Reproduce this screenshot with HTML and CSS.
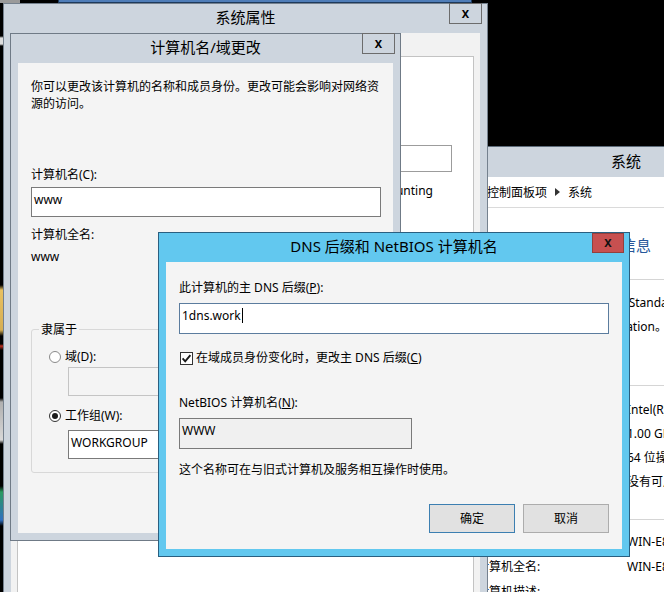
FILE: index.html
```html
<!DOCTYPE html>
<html lang="zh-CN">
<head>
    <meta charset="UTF-8">
    <title>DNS 后缀和 NetBIOS 计算机名</title>
    <link rel="stylesheet" href="styles.css">
</head>
<body>
    <!-- 桌面边缘 -->
    <div class="icons"></div>
    <div class="corner"></div>
    <div class="behind"></div>

    <!-- 控制面板 / 系统 -->
    <div class="win cp">
        <div class="titlebar"><span class="title">系统</span></div>
        <div class="cp-address">
            <span>所有控制面板项</span>
            <svg class="crumb" width="5" height="8" viewBox="0 0 5 8"><path d="M0 0 L5 4 L0 8 Z" fill="#333"/></svg>
            <span>系统</span>
        </div>
        <div class="cp-body">
            <div class="cp-heading">查看有关计算机的基本信息</div>
            <div class="cp-section first">
                <div class="cp-row wide">Windows Server 2012 R2 Standard</div>
                <div class="cp-row wide">© 2013 Microsoft Corporation。保留所有权利。</div>
            </div>
            <div class="cp-section second">
                <div class="cp-row"><span>处理器:</span><span>Intel(R) Xeon(R) CPU E5-2630</span></div>
                <div class="cp-row"><span>安装的内存(RAM):</span><span>1.00 GB</span></div>
                <div class="cp-row"><span>系统类型:</span><span>64 位操作系统，基于 x64 的处理器</span></div>
                <div class="cp-row"><span>笔和触摸:</span><span>没有可用于此显示器的笔或触控输入</span></div>
            </div>
            <div class="cp-section third">
                <div class="cp-row tall"><span>计算机名:</span><span>WIN-E8G5RQ1MJ0K</span></div>
                <div class="cp-row tall"><span>计算机全名:</span><span>WIN-E8G5RQ1MJ0K</span></div>
                <div class="cp-row tall"><span>计算机描述:</span><span></span></div>
            </div>
        </div>
    </div>

    <!-- 系统属性 -->
    <div class="win sysprops">
        <div class="titlebar">
            <span class="title">系统属性</span>
            <span class="close">X</span>
        </div>
        <div class="client">
            <div class="tabs"></div>
            <div class="tab-page">
                <div class="desc-box"></div>
                <div class="example">例如: "IIS Production Server" 或 "Accounting</div>
            </div>
        </div>
    </div>

    <!-- 计算机名/域更改 -->
    <div class="win dlg-name">
        <div class="titlebar">
            <span class="title">计算机名/域更改</span>
            <span class="close">X</span>
        </div>
        <div class="content name-content">
            <p class="intro">你可以更改该计算机的名称和成员身份。更改可能会影响对网络资<br>源的访问。</p>
            <p class="lbl name-lbl">计算机名(C):</p>
            <div class="field name-field">www</div>
            <p class="lbl full-lbl">计算机全名:</p>
            <p class="lbl full-val">www</p>
            <fieldset class="member">
                <legend>隶属于</legend>
                <div class="radio-row first"><span class="radio"></span>域(D):</div>
                <div class="field disabled domain-field"></div>
                <div class="radio-row second"><span class="radio on"></span>工作组(W):</div>
                <div class="field wg-field">WORKGROUP</div>
            </fieldset>
        </div>
    </div>

    <!-- DNS 后缀和 NetBIOS 计算机名 -->
    <div class="win dlg-dns">
        <div class="titlebar">
            <span class="title">DNS 后缀和 NetBIOS 计算机名</span>
            <span class="close red">X</span>
        </div>
        <div class="content dns-content">
            <p class="lbl">此计算机的主 DNS 后缀(<u>P</u>):</p>
            <div class="field focus dns-field">1dns.work<span class="caret"></span></div>
            <div class="check-row">
                <svg class="check" width="13" height="13" viewBox="0 0 13 13">
                    <rect x="0.5" y="0.5" width="12" height="12" fill="#fff" stroke="#333"/>
                    <path d="M2.6 6.4 L5.2 9.3 L10.4 3.2" fill="none" stroke="#1a1a1a" stroke-width="1.9"/>
                </svg>
                <span>在域成员身份变化时，更改主 DNS 后缀(<u>C</u>)</span>
            </div>
            <p class="lbl netbios-lbl">NetBIOS 计算机名(<u>N</u>):</p>
            <div class="field readonly netbios-field">WWW</div>
            <p class="lbl note">这个名称可在与旧式计算机及服务相互操作时使用。</p>
            <div class="buttons">
                <span class="btn default">确定</span>
                <span class="btn">取消</span>
            </div>
        </div>
    </div>
</body>
</html>
```

FILE: styles.css
```css
*{
    margin:0;
    padding:0;
    box-sizing:border-box;
}
body{
    width:664px;
    height:592px;
    overflow:hidden;
    position:relative;
    background:#000;
    font-family:"Segoe UI","Noto Sans","Noto Sans CJK SC",sans-serif;
    font-size:12px;
    color:#000;
}

/* desktop bits */
.icons{
    position:absolute;
    left:0;top:0;
    width:3px;height:592px;
    background:linear-gradient(#000 0,#000 36px,#ddd 38px,#ddd 44px,#000 46px,#000 285px,#e8c060 290px,#d6ae52 330px,#000 336px,#000 344px,#c03020 346px,#000 350px,#000 398px,#b0b0b0 402px,#d8d8d8 440px,#000 444px,#000 486px,#2a9a60 492px,#3070c0 520px,#000 526px);
}
.corner{
    position:absolute;
    left:0;top:0;
    width:20px;height:3px;
    background:#9a9a9a;
}
.behind{
    position:absolute;
    left:58px;top:-20px;
    width:414px;height:23px;
    background:#4f7db8;
    border:1px solid #1d3a5c;
}

/* windows */
.win{
    position:absolute;
    display:flex;
    flex-direction:column;
    border:1px solid #75818e;
    background:#cdd5de;
    padding:0 7px 7px;
}
.titlebar{
    display:grid;
    grid-template-columns:1fr auto 1fr;
    height:29px;
    margin:0 -7px;
    flex:none;
}
.title{
    grid-column:2;
    font-size:15px;
    line-height:27px;
    white-space:nowrap;
}
.close{
    grid-column:3;
    justify-self:end;
    align-self:start;
    width:33px;height:21px;
    margin:-1px 5px 0 0;
    border:1px solid #6c6c6c;
    text-align:center;
    font:bold 11px/19px "Noto Sans",sans-serif;
}
.close.red{
    margin-top:0;
    width:32px;height:20px;
    line-height:18px;
    background:#c75050;
    border-color:#93403d;
    color:#111;
}
.content{
    flex:1;
    background:#f4f4f4;
}
.lbl{
    line-height:17px;
    white-space:nowrap;
}
.field{
    height:30px;
    border:1px solid #7a7a7a;
    background:#fff;
    padding:3px 0 0 2px;
    line-height:17px;
    white-space:nowrap;
}

/* 系统属性 */
.sysprops{
    left:3px;top:3px;
    width:485px;height:600px;
    z-index:2;
    padding-bottom:0;
}
.sysprops .client{
    flex:1;
    background:#f2f2f2;
    padding:0 6px;
    display:flex;
    flex-direction:column;
}
.tabs{
    height:23px;
}
.tab-page{
    flex:1;
    background:#fff;
    border:1px solid #c3c3c3;
}
.desc-box{
    width:300px;height:27px;
    margin:88px 21px 0 auto;
    border:1px solid #9c9c9c;
}
.example{
    margin:11px 40px 0 0;
    text-align:right;
    line-height:16px;
    white-space:nowrap;
}

/* 计算机名/域更改 */
.dlg-name{
    left:10px;top:33px;
    width:391px;height:508px;
    z-index:3;
    border-color:#6f7a86;
}
.name-content{
    padding:15px 12px 0 13px;
}
.intro{
    line-height:17px;
    white-space:nowrap;
}
.name-lbl{margin-top:54px;}
.name-field{margin-top:4px;}
.full-lbl{margin-top:9px;}
.full-val{margin-top:5px;}
.member{
    margin-top:56px;
    border:1px solid #d8d8d8;
    border-radius:3px;
    padding:0 0 13px;
}
.member legend{
    margin-left:7px;
    padding:0 2px;
    line-height:17px;
}
.radio-row{
    display:flex;
    align-items:center;
    gap:4px;
    margin-left:17px;
    line-height:17px;
}
.radio-row.first{margin-top:10px;}
.radio-row.second{margin-top:11px;}
.radio{
    width:12px;height:12px;
    border:1px solid #8a8a8a;
    border-radius:50%;
    background:#fff;
    display:inline-flex;
    align-items:center;
    justify-content:center;
}
.radio.on{border-color:#333;}
.radio.on::after{
    content:"";
    width:6px;height:6px;
    border-radius:50%;
    background:#1a1a1a;
}
.domain-field,.wg-field{
    width:300px;height:29px;
    margin-left:36px;
}
.domain-field{margin-top:2px;}
.wg-field{margin-top:6px;}
.field.disabled{
    background:#f4f4f4;
    border-color:#c4c4c4;
}

/* DNS 对话框 */
.dlg-dns{
    left:158px;top:232px;
    width:472px;height:325px;
    z-index:4;
    background:#62c8ef;
    border-color:#2a5f80;
}
.dns-content{
    padding:18px 13px 0;
}
.dns-content .lbl{line-height:16px;}
.dns-field{
    margin-top:7px;
    height:31px;
    border-color:#5b7c9e;
    display:flex;
    align-items:flex-start;
}
.caret{
    display:inline-block;
    width:1px;height:15px;
    margin:1px 0 0 1px;
    background:#000;
}
.check-row{
    margin-top:16px;
    display:flex;
    align-items:center;
    gap:3px;
    padding-left:1px;
    line-height:16px;
}
.check{flex:none;}
.dns-content .netbios-lbl{margin-top:29px;}
.netbios-field{
    margin-top:7px;
    width:233px;height:31px;
    background:#f0f0f0;
}
.dns-content .note{margin-top:13px;}
.buttons{
    margin-top:26px;
    display:flex;
    justify-content:flex-end;
    gap:8px;
}
.btn{
    width:86px;height:29px;
    border:1px solid #acacac;
    background:#e1e1e1;
    text-align:center;
    line-height:27px;
}
.btn.default{border-color:#3c7fb1;}

/* 控制面板 系统 */
.cp{
    left:300px;top:146px;
    width:652px;height:460px;
    z-index:1;
    border-color:#5d6b79;
    padding-bottom:0;
}
.cp .titlebar{height:30px;}
.cp .title{line-height:28px;}
.cp-address{
    margin:0 -7px;
    height:31px;
    background:#fff;
    border-bottom:1px solid #dadada;
    padding-left:162px;
    display:flex;
    align-items:center;
    gap:8px;
    white-space:nowrap;
}
.cp-body{
    flex:1;
    margin:0 -7px;
    background:#fff;
    padding:27px 0 0 176px;
}
.cp-heading{
    margin-left:-6px;
    font-size:15px;
    line-height:20px;
    color:#26579a;
    white-space:nowrap;
}
.cp-section{
    border-top:1px solid #d5d5d5;
}
.cp-section.first{margin-top:24px;padding-top:11px;}
.cp-section.second{margin-top:46px;padding-top:12px;}
.cp-section.third{margin-top:25px;padding-top:9px;}
.cp-row{
    display:grid;
    grid-template-columns:150px 1fr;
    height:24px;
    line-height:24px;
    white-space:nowrap;
}
.cp-row.wide{
    display:block;
    padding-left:10px;
}
.cp-row.tall{
    height:25px;
    line-height:25px;
}
```
